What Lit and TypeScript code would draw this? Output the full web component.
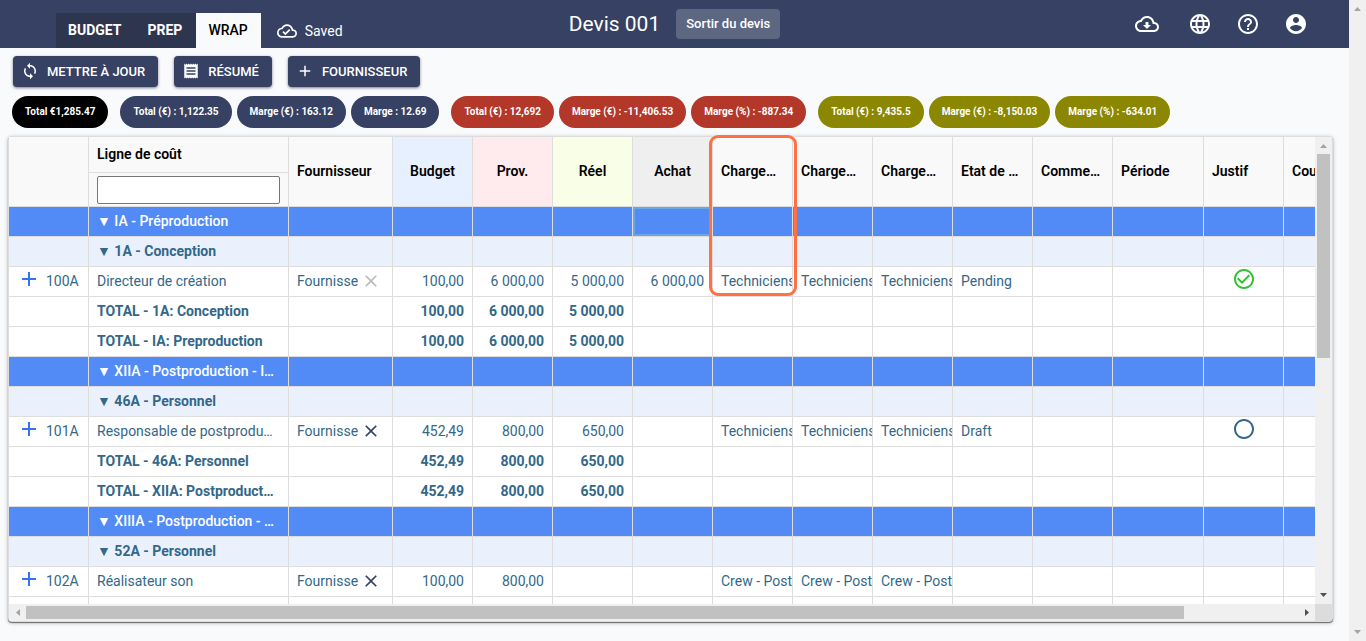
import { LitElement, html, css, svg, nothing } from "lit";
import { customElement, property } from "lit/decorators.js";

type Kind = "group" | "sub" | "line" | "total";

interface Row {
  kind: Kind;
  label: string;
  code?: string;
  supplier?: string;
  muted?: boolean;
  budget?: string;
  prov?: string;
  reel?: string;
  achat?: string;
  charge?: string;
  etat?: string;
  justif?: "done" | "open";
  selected?: boolean;
}

const ROWS: Row[] = [
  { kind: "group", label: "IA - Préproduction", selected: true },
  { kind: "sub", label: "1A - Conception" },
  { kind: "line", code: "100A", label: "Directeur de création", supplier: "Fournisse", muted: true, budget: "100,00", prov: "6 000,00", reel: "5 000,00", achat: "6 000,00", charge: "Techniciens", etat: "Pending", justif: "done" },
  { kind: "total", label: "TOTAL - 1A: Conception", budget: "100,00", prov: "6 000,00", reel: "5 000,00" },
  { kind: "total", label: "TOTAL - IA: Preproduction", budget: "100,00", prov: "6 000,00", reel: "5 000,00" },
  { kind: "group", label: "XIIA - Postproduction - I…" },
  { kind: "sub", label: "46A - Personnel" },
  { kind: "line", code: "101A", label: "Responsable de postprodu…", supplier: "Fournisse", budget: "452,49", prov: "800,00", reel: "650,00", charge: "Techniciens", etat: "Draft", justif: "open" },
  { kind: "total", label: "TOTAL - 46A: Personnel", budget: "452,49", prov: "800,00", reel: "650,00" },
  { kind: "total", label: "TOTAL - XIIA: Postproduct…", budget: "452,49", prov: "800,00", reel: "650,00" },
  { kind: "group", label: "XIIIA - Postproduction - …" },
  { kind: "sub", label: "52A - Personnel" },
  { kind: "line", code: "102A", label: "Réalisateur son", supplier: "Fournisse", budget: "100,00", prov: "800,00", charge: "Crew - Post" },
  { kind: "total", label: "" },
];

const PILLS: { tone: string; items: string[] }[] = [
  { tone: "black", items: ["Total €1,285.47"] },
  { tone: "navy", items: ["Total (€) : 1,122.35", "Marge (€) : 163.12", "Marge : 12.69"] },
  { tone: "red", items: ["Total (€) : 12,692", "Marge (€) : -11,406.53", "Marge (%) : -887.34"] },
  { tone: "olive", items: ["Total (€) : 9,435.5", "Marge (€) : -8,150.03", "Marge (%) : -634.01"] },
];

const ICONS = {
  cloudDone: svg`<path d="M19.35 10.04C18.67 6.59 15.64 4 12 4 9.11 4 6.6 5.64 5.35 8.04 2.34 8.36 0 10.91 0 14c0 3.31 2.69 6 6 6h13c2.76 0 5-2.24 5-5 0-2.64-2.05-4.78-4.65-4.96zM19 18H6c-2.21 0-4-1.79-4-4 0-2.05 1.53-3.76 3.56-3.97l1.07-.11.5-.95C8.08 7.14 9.94 6 12 6c2.62 0 4.88 1.86 5.39 4.43l.3 1.5 1.53.11c1.56.1 2.78 1.41 2.78 2.96 0 1.65-1.35 3-3 3zm-9-3.82l-2.09-2.09L6.5 13.5 10 17l6.01-6.01-1.41-1.41z"/>`,
  cloudDown: svg`<path d="M19.35 10.04C18.67 6.59 15.64 4 12 4 9.11 4 6.6 5.64 5.35 8.04 2.34 8.36 0 10.91 0 14c0 3.31 2.69 6 6 6h13c2.76 0 5-2.24 5-5 0-2.64-2.05-4.78-4.65-4.96zM19 18H6c-2.21 0-4-1.79-4-4 0-2.05 1.53-3.76 3.56-3.97l1.07-.11.5-.95C8.08 7.14 9.94 6 12 6c2.62 0 4.88 1.86 5.39 4.43l.3 1.5 1.53.11c1.56.1 2.78 1.41 2.78 2.96 0 1.65-1.35 3-3 3zm-5.55-8h-2.9v3H8l4 4 4-4h-2.55z"/>`,
  globe: svg`<path d="M11.99 2C6.47 2 2 6.48 2 12s4.47 10 9.99 10C17.52 22 22 17.52 22 12S17.52 2 11.99 2zm6.93 6h-2.95c-.32-1.25-.78-2.45-1.38-3.56 1.84.63 3.37 1.91 4.33 3.56zM12 4.04c.83 1.2 1.48 2.53 1.91 3.96h-3.82c.43-1.43 1.08-2.76 1.91-3.96zM4.26 14C4.1 13.36 4 12.69 4 12s.1-1.36.26-2h3.38c-.08.66-.14 1.32-.14 2s.06 1.34.14 2H4.26zm.82 2h2.95c.32 1.25.78 2.45 1.38 3.56-1.84-.63-3.37-1.9-4.33-3.56zm2.95-8H5.08c.96-1.66 2.49-2.93 4.33-3.56C8.81 5.55 8.35 6.75 8.03 8zM12 19.96c-.83-1.2-1.48-2.53-1.91-3.96h3.82c-.43 1.43-1.08 2.76-1.91 3.96zM14.34 14H9.66c-.09-.66-.16-1.32-.16-2s.07-1.35.16-2h4.68c.09.65.16 1.32.16 2s-.07 1.34-.16 2zm.25 5.56c.6-1.11 1.06-2.31 1.38-3.56h2.95c-.96 1.65-2.49 2.93-4.33 3.56zM16.36 14c.08-.66.14-1.32.14-2s-.06-1.34-.14-2h3.38c.16.64.26 1.31.26 2s-.1 1.36-.26 2h-3.38z"/>`,
  help: svg`<path d="M11 18h2v-2h-2v2zm1-16C6.48 2 2 6.48 2 12s4.48 10 10 10 10-4.48 10-10S17.52 2 12 2zm0 18c-4.41 0-8-3.59-8-8s3.59-8 8-8 8 3.59 8 8-3.59 8-8 8zm0-14c-2.21 0-4 1.79-4 4h2c0-1.1.9-2 2-2s2 .9 2 2c0 2-3 1.75-3 5h2c0-2.25 3-2.5 3-5 0-2.21-1.79-4-4-4z"/>`,
  account: svg`<path d="M12 2C6.48 2 2 6.48 2 12s4.48 10 10 10 10-4.48 10-10S17.52 2 12 2zm0 3c1.66 0 3 1.34 3 3s-1.34 3-3 3-3-1.34-3-3 1.34-3 3-3zm0 14.2c-2.5 0-4.71-1.28-6-3.22.03-1.99 4-3.08 6-3.08 1.99 0 5.97 1.09 6 3.08-1.29 1.94-3.5 3.22-6 3.22z"/>`,
  sync: svg`<path d="M12 4V1L8 5l4 4V6c3.31 0 6 2.69 6 6 0 1.01-.25 1.97-.7 2.8l1.46 1.46C19.54 15.03 20 13.57 20 12c0-4.42-3.58-8-8-8zm0 14c-3.31 0-6-2.69-6-6 0-1.01.25-1.97.7-2.8L5.24 7.74C4.46 8.97 4 10.43 4 12c0 4.42 3.58 8 8 8v3l4-4-4-4v3z"/>`,
  receipt: svg`<path d="M18 17H6v-2h12v2zm0-4H6v-2h12v2zm0-4H6V7h12v2zM3 22l1.5-1.5L6 22l1.5-1.5L9 22l1.5-1.5L12 22l1.5-1.5L15 22l1.5-1.5L18 22l1.5-1.5L21 22V2l-1.5 1.5L18 2l-1.5 1.5L15 2l-1.5 1.5L12 2l-1.5 1.5L9 2 7.5 3.5 6 2 4.5 3.5 3 2v20z"/>`,
  add: svg`<path d="M19 13h-6v6h-2v-6H5v-2h6V5h2v6h6v2z"/>`,
  close: svg`<path d="M19 6.41 17.59 5 12 10.59 6.41 5 5 6.41 10.59 12 5 17.59 6.41 19 12 13.41 17.59 19 19 17.59 13.41 12z"/>`,
  done: svg`<path d="M16.59 7.58 10 14.17l-3.59-3.58L5 12l5 5 8-8zM12 2C6.48 2 2 6.48 2 12s4.48 10 10 10 10-4.48 10-10S17.52 2 12 2zm0 18c-4.42 0-8-3.58-8-8s3.58-8 8-8 8 3.58 8 8-3.58 8-8 8z"/>`,
  open: svg`<path d="M12 2C6.48 2 2 6.48 2 12s4.48 10 10 10 10-4.48 10-10S17.52 2 12 2zm0 18c-4.42 0-8-3.58-8-8s3.58-8 8-8 8 3.58 8 8-3.58 8-8 8z"/>`,
};

const icon = (name: keyof typeof ICONS, cls = "") =>
  html`<svg class="icon ${cls}" viewBox="0 0 24 24" aria-hidden="true">${ICONS[name]}</svg>`;

@customElement("scroll-track")
class ScrollTrack extends LitElement {
  @property({ reflect: true }) axis: "x" | "y" = "y";
  @property({ type: Number }) thumb = 0;
  @property({ type: Boolean }) endActive = false;

  static styles = css`
    :host { display: flex; flex-direction: column; width: 17px; background: #f0f0f0; }
    :host([axis="x"]) { flex-direction: row; width: auto; height: 17px; }
    .arrow { flex: none; width: 17px; height: 17px; fill: #a3a3a3; }
    .arrow.active { fill: #505050; }
    .lane { flex: 1; display: flex; flex-direction: column; align-items: center; min-height: 0; min-width: 0; }
    :host([axis="x"]) .lane { flex-direction: row; }
    .thumb { background: #c1c1c1; width: 13px; }
    :host([axis="x"]) .thumb { height: 13px; width: auto; }
  `;

  render() {
    const start = this.axis === "y" ? "M5 11h7L8.5 7z" : "M11 5v7L7 8.5z";
    const end = this.axis === "y" ? "M5 6h7L8.5 10z" : "M7 5v7L11 8.5z";
    return html`
      <svg class="arrow" viewBox="0 0 17 17"><path d=${start} /></svg>
      <div class="lane">
        ${this.thumb ? html`<div class="thumb" style="flex-basis:${this.thumb}%"></div>` : nothing}
      </div>
      <svg class="arrow ${this.endActive ? "active" : ""}" viewBox="0 0 17 17"><path d=${end} /></svg>
    `;
  }
}

@customElement("cost-grid")
class CostGrid extends LitElement {
  static styles = css`
    :host {
      position: relative; display: grid; grid-template-columns: minmax(0, 1fr) 17px;
      grid-template-rows: minmax(0, 1fr) 17px; min-height: 0;
      border: 1px solid #ddd; border-radius: 4px; background: #dcdcdc;
      box-shadow: 0 1px 1px rgba(0, 0, 0, .5), 0 1px 4px rgba(0, 0, 0, .25);
    }
    .view { overflow: hidden; background: #fff; }
    table { table-layout: fixed; width: 1355px; border-collapse: separate; border-spacing: 0; font-size: 14px; line-height: 20px; color: #336888; }
    .c-code, .c-std { width: 80px; }
    .c-label { width: 200px; }
    .c-supplier { width: 104px; }
    .c-period { width: 91px; }
    th, td { box-sizing: border-box; padding: 0 8px 2px; border-right: 1px solid #ddd; border-bottom: 1px solid #ddd; overflow: hidden; white-space: nowrap; text-align: left; }
    th { background: #f9f9f9; color: #000; font-weight: 600; }
    .head { height: 36px; }
    .filter { height: 34px; padding-bottom: 0; }
    .filter input { display: block; box-sizing: border-box; width: 100%; height: 28px; border: 1px solid #767676; border-radius: 2px; background: #fff; }
    .center { text-align: center; }
    .blue { background: #e6f0ff; }
    .pink { background: #ffebee; }
    .lime { background: #f9ffe6; }
    .grey { background: #efefef; }
    td { height: 30px; }
    .num { text-align: right; }
    .group td { background: #528bf5; color: #fff; font-weight: 500; }
    .sub td { background: #eaf1fd; font-weight: 700; }
    .total td { font-weight: 700; }
    .group .selected { box-shadow: inset 0 0 0 2px #68a6e4; }
    .code { padding-bottom: 0; vertical-align: top; }
    .codebox { display: flex; align-items: flex-start; gap: 5px; line-height: 28px; }
    .supplier { display: flex; align-items: center; }
    .supplier span { width: 61px; }
    .tool { flex: none; display: flex; padding: 0; border: 0; background: none; color: #33406b; }
    .icon { width: 24px; height: 24px; fill: currentColor; }
    .plus { color: #2f74f0; }
    .close .icon { width: 20px; height: 20px; }
    .close { padding: 0 3px; }
    .muted { color: #bbb; }
    .justif { vertical-align: top; }
    .justif .icon { display: block; margin: 0 auto; }
    .ok { color: #31c131; }
    .highlight { position: absolute; z-index: 2; left: 700px; top: -2px; width: 88px; height: 161px; box-sizing: border-box; border: 3px solid #ff7043; border-radius: 9px; pointer-events: none; }
  `;

  private row(r: Row) {
    const arrow = r.kind === "group" || r.kind === "sub";
    return html`<tr class=${r.kind}>
      <td class="code">${r.code ? html`<div class="codebox"><button class="tool plus" aria-label="Ajouter">${icon("add")}</button><span>${r.code}</span></div>` : nothing}</td>
      <td>${arrow ? "▼ " : ""}${r.label}</td>
      <td>${r.supplier
        ? html`<div class="supplier"><span>${r.supplier}</span><button class="tool close ${r.muted ? "muted" : ""}" aria-label="Retirer">${icon("close")}</button></div>`
        : nothing}</td>
      <td class="num">${r.budget}</td>
      <td class="num">${r.prov}</td>
      <td class="num">${r.reel}</td>
      <td class="num ${r.selected ? "selected" : ""}">${r.achat}</td>
      <td>${r.charge}</td>
      <td>${r.charge}</td>
      <td>${r.charge}</td>
      <td>${r.etat}</td>
      <td></td>
      <td></td>
      <td class="justif">${r.justif ? icon(r.justif, r.justif === "done" ? "ok" : "") : nothing}</td>
      <td></td>
    </tr>`;
  }

  render() {
    return html`
      <div class="view">
        <table>
          <colgroup>
            <col class="c-code" /><col class="c-label" /><col class="c-supplier" />
            <col class="c-std" span="9" /><col class="c-period" /><col class="c-std" span="2" />
          </colgroup>
          <thead>
            <tr>
              <th rowspan="2"></th>
              <th class="head"><label for="cost-filter">Ligne de coût</label></th>
              <th rowspan="2">Fournisseur</th>
              <th rowspan="2" class="center blue">Budget</th>
              <th rowspan="2" class="center pink">Prov.</th>
              <th rowspan="2" class="center lime">Réel</th>
              <th rowspan="2" class="center grey">Achat</th>
              <th rowspan="2">Charge…</th>
              <th rowspan="2">Charge…</th>
              <th rowspan="2">Charge…</th>
              <th rowspan="2">Etat de …</th>
              <th rowspan="2">Comme…</th>
              <th rowspan="2">Période</th>
              <th rowspan="2">Justif</th>
              <th rowspan="2">Cours</th>
            </tr>
            <tr><th class="filter"><input id="cost-filter" type="text" /></th></tr>
          </thead>
          <tbody>${ROWS.map((r) => this.row(r))}</tbody>
        </table>
      </div>
      <scroll-track axis="y" .thumb=${47} .endActive=${true}></scroll-track>
      <scroll-track axis="x" .thumb=${91} .endActive=${true}></scroll-track>
      <div class="highlight"></div>
    `;
  }
}

@customElement("app-root")
class AppRoot extends LitElement {
  static styles = css`
    :host { display: flex; height: 100vh; background: #f9fafc; font-family: Roboto, "Liberation Sans", sans-serif; font-size: 14px; overflow: hidden; }
    button { font-family: inherit; }
    .page { flex: 1; min-width: 0; display: flex; flex-direction: column; }
    .icon { flex: none; width: 24px; height: 24px; fill: currentColor; }
    header { display: grid; grid-template-columns: 1fr auto 1fr; height: 48px; background: #364163; color: #fff; }
    .left { display: flex; align-items: flex-end; padding-left: 56px; }
    .tabs { display: flex; }
    .tab { display: block; padding: 0 14px 0 12px; line-height: 35px; background: #2e364f; color: #fff; font-weight: 700; text-decoration: none; }
    .tab.active { padding-right: 13px; background: #f9fafc; color: #000; font-weight: 500; }
    .saved { display: flex; align-items: center; gap: 8px; height: 35px; padding-left: 16px; }
    .saved .icon { width: 20px; height: 20px; }
    .middle { display: flex; align-items: center; gap: 16px; }
    h1 { margin: 0; font-size: 21px; line-height: 24px; font-weight: 400; }
    .exit { height: 30px; padding: 0 10px 2px; border: 0; border-radius: 4px; background: #5e6782; color: #fff; font-size: 13px; font-weight: 500; }
    .right { display: flex; align-items: center; justify-content: flex-end; gap: 24px; padding-right: 41px; }
    .iconbtn { display: flex; padding: 0; border: 0; background: none; color: #fff; }
    .download { padding-right: 5px; }
    .toolbar { display: flex; gap: 16px; padding: 8px 13px 0; }
    .action { display: flex; align-items: center; gap: 8px; height: 31px; padding: 0 13px 1px 8px; border: 0; border-radius: 4px; background: #364163; color: #fff; font-size: 13px; font-weight: 500; box-shadow: 0 1px 3px rgba(0, 0, 0, .5); }
    .action .icon { width: 18px; height: 18px; }
    .pills { display: flex; flex-wrap: wrap; gap: 12px; padding: 9px 12px 8px; }
    .set { display: flex; gap: 5px; }
    .pill { padding: 0 13px; border-radius: 16px; line-height: 32px; font-size: 10px; font-weight: 700; color: #fff; white-space: nowrap; }
    .black { background: #000; }
    .navy { background: #364163; }
    .red { background: #b43829; }
    .olive { background: #8c8700; }
    cost-grid { flex: 1; margin: 0 16px 19px 8px; }
  `;

  render() {
    return html`
      <div class="page">
        <header>
          <div class="left">
            <nav class="tabs">
              <a class="tab" href="#budget">BUDGET</a><a class="tab" href="#prep">PREP</a><a class="tab active" href="#wrap">WRAP</a>
            </nav>
            <div class="saved">${icon("cloudDone")}<span>Saved</span></div>
          </div>
          <div class="middle"><h1>Devis 001</h1><button class="exit">Sortir du devis</button></div>
          <div class="right">
            <button class="iconbtn download" aria-label="Télécharger">${icon("cloudDown")}</button>
            <button class="iconbtn" aria-label="Langue">${icon("globe")}</button>
            <button class="iconbtn" aria-label="Aide">${icon("help")}</button>
            <button class="iconbtn" aria-label="Compte">${icon("account")}</button>
          </div>
        </header>
        <div class="toolbar">
          <button class="action">${icon("sync")}METTRE À JOUR</button>
          <button class="action">${icon("receipt")}RÉSUMÉ</button>
          <button class="action">${icon("add")}FOURNISSEUR</button>
        </div>
        <div class="pills">
          ${PILLS.map((g) => html`<div class="set">${g.items.map((t) => html`<span class="pill ${g.tone}">${t}</span>`)}</div>`)}
        </div>
        <cost-grid></cost-grid>
      </div>
      <scroll-track axis="y"></scroll-track>
    `;
  }
}
